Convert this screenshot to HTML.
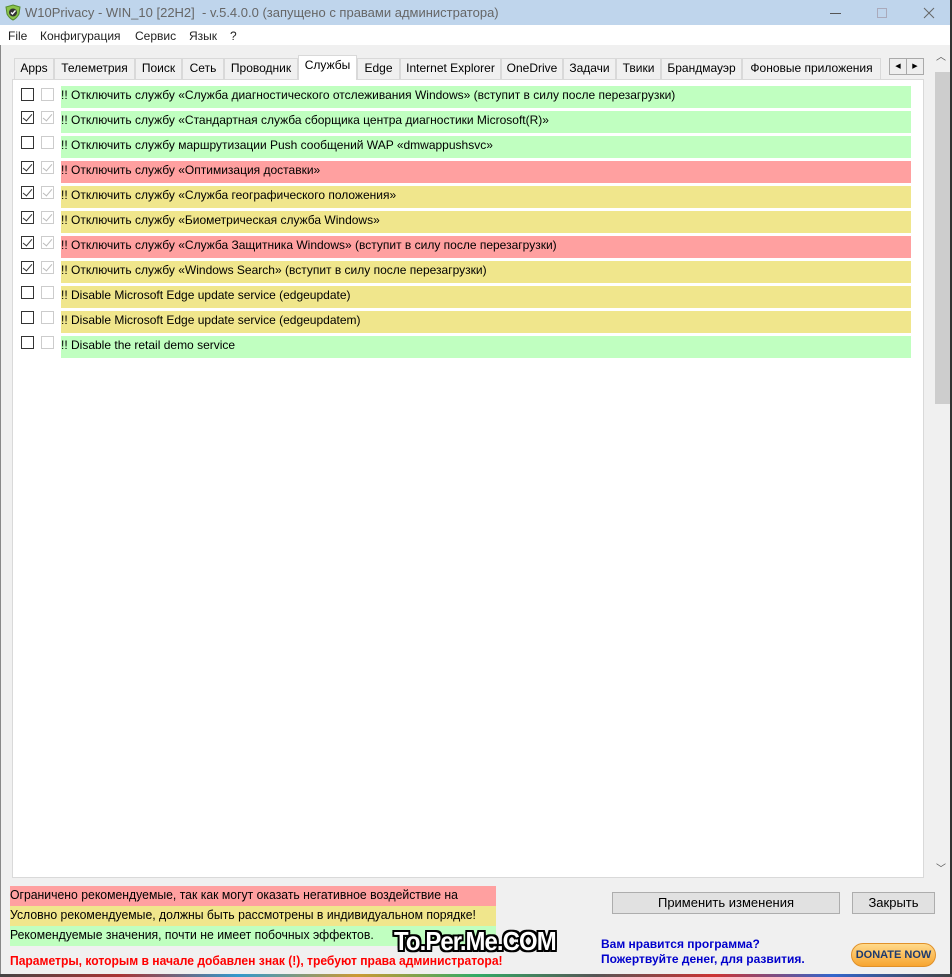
<!DOCTYPE html>
<html><head><meta charset="utf-8"><style>
*{margin:0;padding:0;box-sizing:border-box}
body{width:952px;height:977px;background:#f0f0f0;font-family:"Liberation Sans",sans-serif;font-size:13px;color:#000;position:relative;overflow:hidden}
.a{position:absolute}
.title{left:0;top:0;width:952px;height:25px;background:#bfd5ec;color:#666;font-size:13px}
.menu{left:0;top:25px;width:952px;height:20px;background:#fff;font-size:12px}
.menu span{position:absolute;top:4px;color:#222}
.tab{position:absolute;top:58px;height:21px;border:1px solid #d9d9d9;border-bottom:none;background:#f0f0f0;text-align:center;line-height:19px;font-size:12px}
.tab.sel{top:55px;height:25px;background:#fff;z-index:2}
.panel{left:12px;top:79px;width:912px;height:799px;background:#fff;border:1px solid #d9d9d9}
.row{position:absolute;left:61px;width:850px;height:22px;line-height:18px;font-size:12px;white-space:nowrap}
.g{background:#c0ffc0}.r{background:#ffa0a0}.y{background:#f0e68c}
.cb{position:absolute;width:13px;height:13px;border:1px solid #333;background:#fff}
.cb2{position:absolute;width:13px;height:13px;border:1px solid #ccc;background:#fff}
.ck::after{content:"";position:absolute;left:3px;top:0px;width:4px;height:8px;border:solid #333;border-width:0 1.5px 1.5px 0;transform:rotate(40deg)}
.cb2.ck::after{border-color:#bbb}
.leg{position:absolute;left:10px;width:486px;height:20px;line-height:18px;font-size:13px;white-space:nowrap;overflow:hidden}
.leg span{display:inline-block;transform:scaleX(.94);transform-origin:left}
.btn{position:absolute;background:#e1e1e1;border:1px solid #adadad;text-align:center;line-height:20px;font-size:13px}
</style></head><body>
<div class="a title">
<svg class="a" style="left:5px;top:4px" width="16" height="17" viewBox="0 0 16 17"><path d="M8 1 L15 3 L14 10 Q12 14 8 16 Q4 14 2 10 L1 3 Z" fill="#8bc34a" stroke="#558b2f"/><circle cx="8" cy="8.5" r="4" fill="#333"/><path d="M6 8.5 L7.5 10 L10.5 6.5" stroke="#fff" stroke-width="1.4" fill="none"/></svg>
<span class="a" style="left:25px;top:5px">W10Privacy - WIN_10 [22H2]&nbsp; - v.5.4.0.0 (запущено с правами администратора)</span>
<div class="a" style="left:830px;top:13px;width:11px;height:1px;background:#555"></div>
<div class="a" style="left:877px;top:8px;width:10px;height:10px;border:1px solid #aab"></div>
<svg class="a" style="left:923px;top:7px" width="12" height="12"><path d="M1 1L11 11M11 1L1 11" stroke="#666" stroke-width="1"/></svg>
</div>
<div class="a menu"><span style="left:8px">File</span><span style="left:40px">Конфигурация</span><span style="left:135px">Сервис</span><span style="left:189px">Язык</span><span style="left:230px">?</span></div>
<div class="a" style="left:0;top:45px;width:1px;height:932px;background:#888"></div>
<div class="tab" style="left:14px;width:40px">Apps</div>
<div class="tab" style="left:54px;width:81px">Телеметрия</div>
<div class="tab" style="left:135px;width:47px">Поиск</div>
<div class="tab" style="left:182px;width:42px">Сеть</div>
<div class="tab" style="left:224px;width:74px">Проводник</div>
<div class="tab sel" style="left:298px;width:59px">Службы</div>
<div class="tab" style="left:357px;width:43px">Edge</div>
<div class="tab" style="left:400px;width:101px">Internet Explorer</div>
<div class="tab" style="left:501px;width:62px">OneDrive</div>
<div class="tab" style="left:563px;width:53px">Задачи</div>
<div class="tab" style="left:616px;width:45px">Твики</div>
<div class="tab" style="left:661px;width:81px">Брандмауэр</div>
<div class="tab" style="left:742px;width:139px">Фоновые приложения</div>
<div class="a" style="left:889px;top:58px;width:18px;height:17px;border:1px solid #aaa;background:#eee;font-size:7px;text-align:center;line-height:15px">◀</div>
<div class="a" style="left:906px;top:58px;width:18px;height:17px;border:1px solid #aaa;background:#eee;font-size:7px;text-align:center;line-height:15px">▶</div>
<div class="a panel"></div>
<div class="a" style="left:934px;top:45px;width:16px;height:832px;background:#f0f0f0"></div>
<div class="a" style="left:935px;top:72px;width:15px;height:332px;background:#cdcdcd"></div>
<div class="a" style="left:936px;top:48px;font-size:10px;color:#555">︿</div>
<div class="a" style="left:936px;top:860px;font-size:10px;color:#555">﹀</div>
<div class="a" style="left:950px;top:0;width:2px;height:977px;background:#333"></div>

<div class="cb a" style="left:21px;top:88px"></div><div class="cb2 a" style="left:41px;top:88px"></div><div class="row g" style="top:86px">!! Отключить службу «Служба диагностического отслеживания Windows» (вступит в силу после перезагрузки)</div>
<div class="cb ck a" style="left:21px;top:111px"></div><div class="cb2 ck a" style="left:41px;top:111px"></div><div class="row g" style="top:111px">!! Отключить службу «Стандартная служба сборщика центра диагностики Microsoft(R)»</div>
<div class="cb a" style="left:21px;top:136px"></div><div class="cb2 a" style="left:41px;top:136px"></div><div class="row g" style="top:136px">!! Отключить службу маршрутизации Push сообщений WAP «dmwappushsvc»</div>
<div class="cb ck a" style="left:21px;top:161px"></div><div class="cb2 ck a" style="left:41px;top:161px"></div><div class="row r" style="top:161px">!! Отключить службу «Оптимизация доставки»</div>
<div class="cb ck a" style="left:21px;top:186px"></div><div class="cb2 ck a" style="left:41px;top:186px"></div><div class="row y" style="top:186px">!! Отключить службу «Служба географического положения»</div>
<div class="cb ck a" style="left:21px;top:211px"></div><div class="cb2 ck a" style="left:41px;top:211px"></div><div class="row y" style="top:211px">!! Отключить службу «Биометрическая служба Windows»</div>
<div class="cb ck a" style="left:21px;top:236px"></div><div class="cb2 ck a" style="left:41px;top:236px"></div><div class="row r" style="top:236px">!! Отключить службу «Служба Защитника Windows» (вступит в силу после перезагрузки)</div>
<div class="cb ck a" style="left:21px;top:261px"></div><div class="cb2 ck a" style="left:41px;top:261px"></div><div class="row y" style="top:261px">!! Отключить службу «Windows Search» (вступит в силу после перезагрузки)</div>
<div class="cb a" style="left:21px;top:286px"></div><div class="cb2 a" style="left:41px;top:286px"></div><div class="row y" style="top:286px">!! Disable Microsoft Edge update service (edgeupdate)</div>
<div class="cb a" style="left:21px;top:311px"></div><div class="cb2 a" style="left:41px;top:311px"></div><div class="row y" style="top:311px">!! Disable Microsoft Edge update service (edgeupdatem)</div>
<div class="cb a" style="left:21px;top:336px"></div><div class="cb2 a" style="left:41px;top:336px"></div><div class="row g" style="top:336px">!! Disable the retail demo service</div>

<div class="leg r" style="top:886px"><span>Ограничено рекомендуемые, так как могут оказать негативное воздействие на</span></div>
<div class="leg y" style="top:906px"><span>Условно рекомендуемые, должны быть рассмотрены в индивидуальном порядке!</span></div>
<div class="leg g" style="top:926px"><span>Рекомендуемые значения, почти не имеет побочных эффектов.</span></div>
<div class="a" style="left:10px;top:953px;color:#f00;font-size:13px;font-weight:bold;white-space:nowrap"><span style="display:inline-block;transform:scaleX(.93);transform-origin:left">Параметры, которым в начале добавлен знак (!), требуют права администратора!</span></div>
<div class="a" style="left:394px;top:926px;font-size:26px;font-weight:bold;color:#fff;letter-spacing:-1px;text-shadow:-2px -2px 0 #000,2px -2px 0 #000,-2px 2px 0 #000,2px 2px 0 #000,0 2px 0 #000,0 -2px 0 #000,2px 0 0 #000,-2px 0 0 #000;transform:scaleX(.92);transform-origin:left">To.Per.Me.COM</div>
<div class="btn" style="left:612px;top:892px;width:228px;height:22px">Применить изменения</div>
<div class="btn" style="left:852px;top:892px;width:83px;height:22px">Закрыть</div>
<div class="a" style="left:601px;top:937px;color:#0000cc;font-size:12px;font-weight:bold;line-height:15px;white-space:nowrap">Вам нравится программа?<br>Пожертвуйте денег, для развития.</div>
<div class="a" style="left:851px;top:943px;width:85px;height:24px;border-radius:12px;background:linear-gradient(#ffd98a,#f7a531);border:1px solid #e0912a;color:#1d3a6e;font-size:11px;font-weight:bold;text-align:center;line-height:22px">DONATE NOW</div>
<div class="a" style="left:0;top:974px;width:952px;height:3px;background:linear-gradient(90deg,#444,#a33,#39c,#c93,#3a6,#555,#c33,#36c,#444)"></div>
</body></html>
